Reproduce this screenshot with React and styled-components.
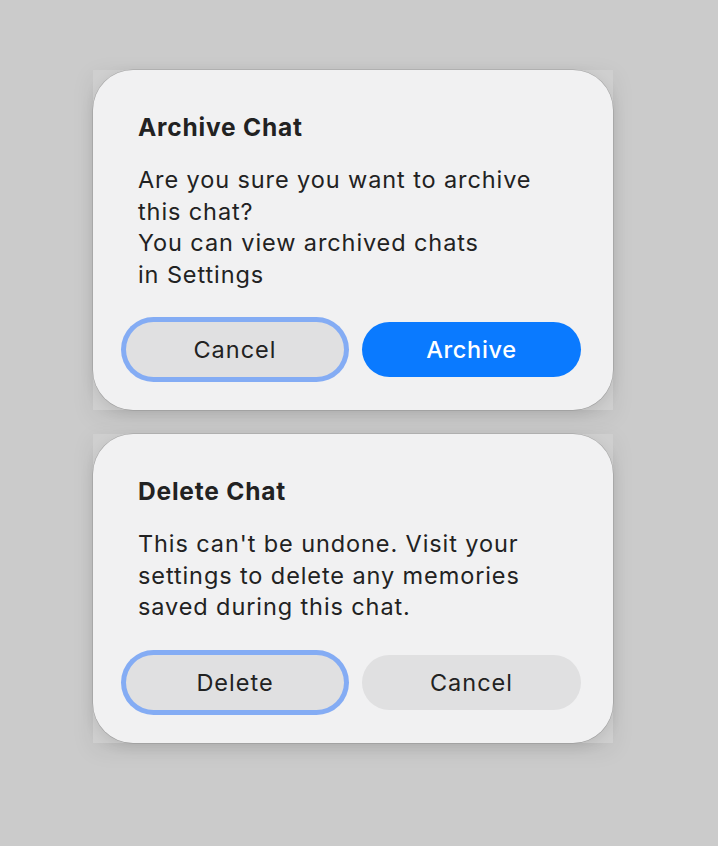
import styled, { createGlobalStyle } from "styled-components";

const GlobalStyle = createGlobalStyle`
  html, body {
    margin: 0;
    padding: 0;
    background: #cbcbcb;
    font-family: Inter, "Noto Sans", sans-serif;
  }
`;

const dialogs = [
  {
    title: "Archive Chat",
    lines: ["Are you sure you want to archive", "this chat?", "You can view archived chats", "in Settings"],
    buttons: [
      { label: "Cancel", focused: true },
      { label: "Archive", primary: true },
    ],
  },
  {
    title: "Delete Chat",
    lines: ["This can't be undone. Visit your", "settings to delete any memories", "saved during this chat."],
    buttons: [
      { label: "Delete", focused: true },
      { label: "Cancel" },
    ],
  },
];

function App() {
  return (
    <Page>
      <GlobalStyle />
      {dialogs.map((d) => (
        <Backdrop key={d.title}>
          <Dialog>
            <Title>{d.title}</Title>
            <Message>
              {d.lines.map((line) => (
                <div key={line}>{line}</div>
              ))}
            </Message>
            <Actions>
              {d.buttons.map((b) => (
                <Button key={b.label} $primary={b.primary} $focused={b.focused}>
                  {b.label}
                </Button>
              ))}
            </Actions>
          </Dialog>
        </Backdrop>
      ))}
    </Page>
  );
}

const Page = styled.div`
  min-height: 846px;
  display: flex;
  flex-direction: column;
  gap: 24px;
  padding: 70px 0 0 93px;
  box-sizing: border-box;
`;

const Backdrop = styled.div`
  width: 520px;
  background: #cfcfcf;
  box-shadow: 0 6px 22px rgba(0, 0, 0, 0.08);
`;

const Dialog = styled.div`
  background: #f1f1f2;
  border-radius: 40px;
  box-shadow: 0 0 0 0.5px rgba(0, 0, 0, 0.18), 0 4px 14px rgba(0, 0, 0, 0.1);
  padding: 43px 0 33px;
  color: #222;
`;

const Title = styled.div`
  font-size: 24.5px;
  font-weight: 700;
  line-height: 28px;
  letter-spacing: 0.8px;
  padding: 0 45px;
`;

const Message = styled.div`
  margin-top: 23px;
  padding: 0 45px;
  font-size: 23.5px;
  line-height: 31.5px;
  letter-spacing: 0.9px;
`;

const Actions = styled.div`
  margin-top: 32px;
  display: grid;
  grid-template-columns: 218px 219px;
  gap: 18px;
  padding: 0 32px 0 33px;
`;

const Button = styled.button`
  height: 55px;
  border: none;
  border-radius: 28px;
  font-family: inherit;
  font-size: 23.5px;
  letter-spacing: ${(p) => (p.$primary ? "0.7px" : "1px")};
  font-weight: ${(p) => (p.$primary ? 500 : 400)};
  color: ${(p) => (p.$primary ? "#ffffff" : "#222")};
  background: ${(p) => (p.$primary ? "#0a7aff" : "#e0e0e1")};
  box-shadow: ${(p) => (p.$focused ? "0 0 0 5px #84acf4" : "none")};
  cursor: pointer;
`;

export default App;
